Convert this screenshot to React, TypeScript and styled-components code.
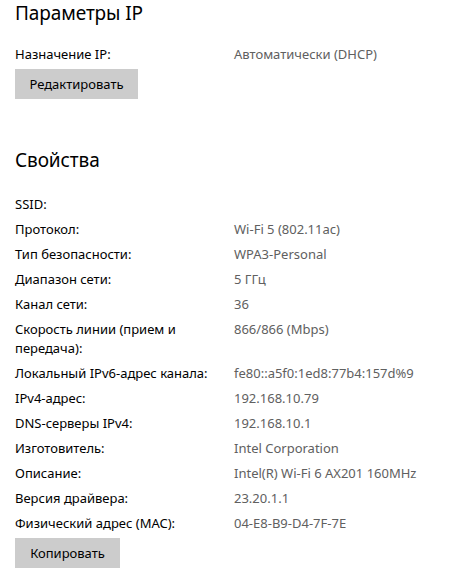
import { Fragment } from "react";
import styled, { createGlobalStyle } from "styled-components";

const GlobalStyle = createGlobalStyle`
  body {
    margin: 0;
    background: #ffffff;
    font-family: "Noto Sans", "Open Sans", sans-serif;
    color: #000000;
  }
`;

const Page = styled.div`
  padding: 0 15px 0 15px;
  width: 460px;
  height: 583px;
  box-sizing: border-box;
  overflow: hidden;
`;

const Section = styled.section<{ $top: number }>`
  padding-top: ${(p) => p.$top}px;
`;

const Heading = styled.h2`
  margin: 0;
  font-size: 19px;
  font-weight: 400;
  line-height: 26px;
  letter-spacing: -0.1px;
`;

const Rows = styled.div<{ $top: number }>`
  display: grid;
  grid-template-columns: 219px 1fr;
  row-gap: 6px;
  margin-top: ${(p) => p.$top}px;
  font-size: 13px;
  line-height: 19px;
`;

const Label = styled.div`
  color: #000000;
  padding-right: 12px;
`;

const Value = styled.div`
  color: #606060;
`;

const Button = styled.button<{ $width: number }>`
  display: block;
  width: ${(p) => p.$width}px;
  height: 30px;
  margin-top: 5px;
  padding: 0;
  border: none;
  background: #cccccc;
  color: #000000;
  font-family: inherit;
  font-size: 13px;
`;

type Row = [string, string];

const props: Row[] = [
  ["SSID:", ""],
  ["Протокол:", "Wi-Fi 5 (802.11ac)"],
  ["Тип безопасности:", "WPA3-Personal"],
  ["Диапазон сети:", "5 ГГц"],
  ["Канал сети:", "36"],
  ["Скорость линии (прием и передача):", "866/866 (Mbps)"],
  ["Локальный IPv6-адрес канала:", "fe80::a5f0:1ed8:77b4:157d%9"],
  ["IPv4-адрес:", "192.168.10.79"],
  ["DNS-серверы IPv4:", "192.168.10.1"],
  ["Изготовитель:", "Intel Corporation"],
  ["Описание:", "Intel(R) Wi-Fi 6 AX201 160MHz"],
  ["Версия драйвера:", "23.20.1.1"],
  ["Физический адрес (MAC):", "04-E8-B9-D4-7F-7E"],
];

export default function App() {
  return (
    <>
      <GlobalStyle />
      <Page>
        <Section $top={0}>
          <Heading>Параметры IP</Heading>
          <Rows $top={19}>
            <Label>Назначение IP:</Label>
            <Value>Автоматически (DHCP)</Value>
          </Rows>
          <Button $width={123}>Редактировать</Button>
        </Section>
        <Section $top={48}>
          <Heading>Свойства</Heading>
          <Rows $top={22}>
            {props.map(([label, value]) => (
              <Fragment key={label}>
                <Label>{label}</Label>
                <Value>{value}</Value>
              </Fragment>
            ))}
          </Rows>
          <Button $width={105}>Копировать</Button>
        </Section>
      </Page>
    </>
  );
}
